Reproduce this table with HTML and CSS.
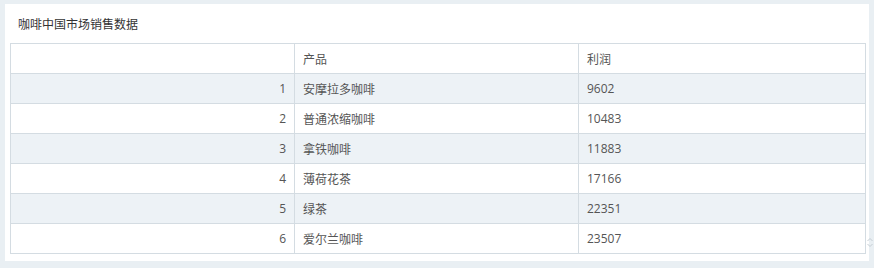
FILE: index.html
```html
<!DOCTYPE html>
<html lang="zh">
<head>
<meta charset="utf-8">
<link rel="stylesheet" href="styles.css">
</head>
<body>
<div class="card">
  <div class="title">咖啡中国市场销售数据</div>
  <table class="grid">
    <colgroup><col class="c0"><col class="c1"><col class="c2"></colgroup>
    <thead>
      <tr><th></th><th>产品</th><th>利润</th></tr>
    </thead>
    <tbody>
      <tr class="odd"><td class="idx">1</td><td>安摩拉多咖啡</td><td>9602</td></tr>
      <tr><td class="idx">2</td><td>普通浓缩咖啡</td><td>10483</td></tr>
      <tr class="odd"><td class="idx">3</td><td>拿铁咖啡</td><td>11883</td></tr>
      <tr><td class="idx">4</td><td>薄荷花茶</td><td>17166</td></tr>
      <tr class="odd"><td class="idx">5</td><td>绿茶</td><td>22351</td></tr>
      <tr><td class="idx">6</td><td>爱尔兰咖啡</td><td>23507</td></tr>
    </tbody>
  </table>
  <svg class="resize" width="6" height="11" viewBox="0 0 6 11"><path d="M0.5 4 L3 1.5 L5.5 4 M0.5 7 L3 9.5 L5.5 7" fill="none" stroke="#c4ccd2" stroke-width="1"/></svg>
</div>
</body>
</html>
```
FILE: styles.css
```css
html, body {
  margin: 0;
  padding: 0;
  background: #e9eff3;
}
body {
  padding: 4px 5px 0 5px;
  font-family: "Open Sans", "Noto Sans CJK SC", sans-serif;
  font-size: 12px;
  color: #555;
}
.card {
  position: relative;
  width: 854px;
  height: 257px;
  background: #fff;
  padding: 0 5px 0 5px;
}
.title {
  height: 39px;
  line-height: 42px;
  padding-left: 8px;
  color: #333;
  font-size: 12px;
}
.grid {
  border-collapse: collapse;
  width: 855px;
  table-layout: fixed;
}
.c0 { width: 284px; }
.c1 { width: 284px; }
.c2 { width: 287px; }
.grid th, .grid td {
  border: 1px solid #d4dce2;
  height: 29px;
  padding: 0 8px;
  text-align: left;
  font-weight: normal;
  color: #555;
  white-space: nowrap;
}
.grid td.idx {
  text-align: right;
}
.grid tr.odd td {
  background: #edf2f6;
}
.resize {
  position: absolute;
  right: -4px;
  top: 233px;
}
```
